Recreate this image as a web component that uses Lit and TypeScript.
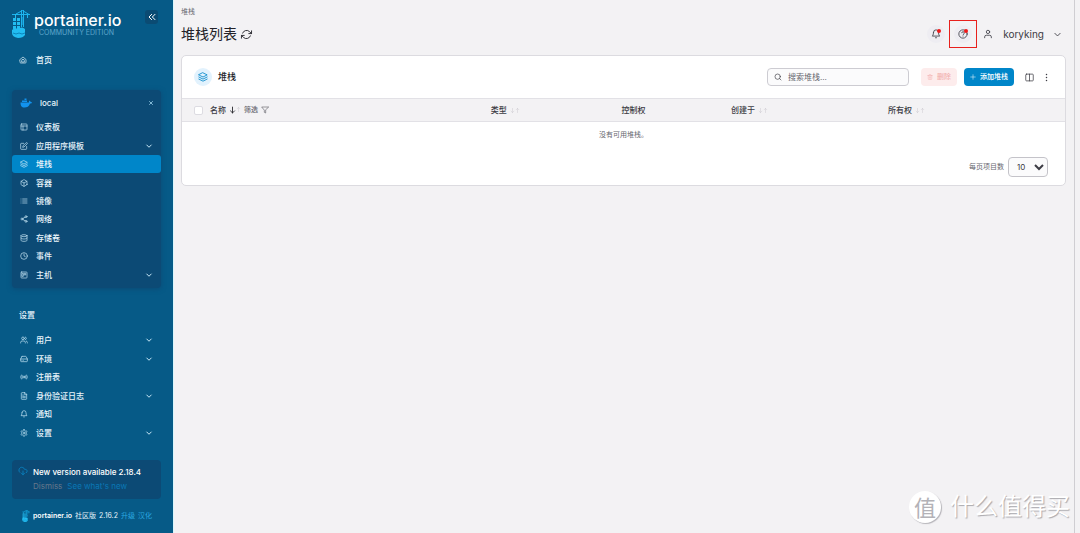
import { LitElement, html, css, svg, nothing } from "lit";
import { customElement, property } from "lit/decorators.js";
import { classMap } from "lit/directives/class-map.js";

const icons: Record<string, any> = {
  home: svg`<path d="M3 10.5 12 3l9 7.5V19a2 2 0 0 1-2 2H5a2 2 0 0 1-2-2z"/><path d="M8 17v-3a4 4 0 0 1 8 0v3z"/>`,
  layout: svg`<rect x="3" y="3" width="18" height="18" rx="2"/><path d="M3 9h18M9 21V9"/>`,
  edit: svg`<path d="M11 4H4a2 2 0 0 0-2 2v14a2 2 0 0 0 2 2h14a2 2 0 0 0 2-2v-7"/><path d="M18.5 2.5a2.1 2.1 0 0 1 3 3L12 15l-4 1 1-4z"/>`,
  layers: svg`<path d="m12 2 10 5-10 5L2 7z"/><path d="m2 12 10 5 10-5"/><path d="m2 17 10 5 10-5"/>`,
  box: svg`<path d="M21 16V8a2 2 0 0 0-1-1.7l-7-4a2 2 0 0 0-2 0l-7 4A2 2 0 0 0 3 8v8a2 2 0 0 0 1 1.7l7 4a2 2 0 0 0 2 0l7-4a2 2 0 0 0 1-1.7z"/><path d="m3.3 7 8.7 5 8.7-5M12 22V12"/>`,
  list: svg`<path d="M8 6h13M8 12h13M8 18h13M3 6h.01M3 12h.01M3 18h.01"/>`,
  share: svg`<circle cx="18" cy="5" r="3"/><circle cx="6" cy="12" r="3"/><circle cx="18" cy="19" r="3"/><path d="m8.6 13.5 6.8 4M15.4 6.5l-6.8 4"/>`,
  database: svg`<ellipse cx="12" cy="5" rx="9" ry="3"/><path d="M21 12c0 1.7-4 3-9 3s-9-1.3-9-3"/><path d="M3 5v14c0 1.7 4 3 9 3s9-1.3 9-3V5"/>`,
  clock: svg`<circle cx="12" cy="12" r="10"/><path d="M12 6v6l4 2"/>`,
  trello: svg`<rect x="3" y="3" width="18" height="18" rx="2"/><path d="M7 7h3v9H7zM14 7h3v5h-3z"/>`,
  users: svg`<path d="M16 21v-2a4 4 0 0 0-4-4H6a4 4 0 0 0-4 4v2"/><circle cx="9" cy="7" r="4"/><path d="M22 21v-2a4 4 0 0 0-3-3.9M16 3.1a4 4 0 0 1 0 7.8"/>`,
  drive: svg`<path d="M22 12H2"/><path d="M5.5 5.1 2 12v6a2 2 0 0 0 2 2h16a2 2 0 0 0 2-2v-6l-3.5-6.9A2 2 0 0 0 16.8 4H7.2a2 2 0 0 0-1.7 1.1zM6 16h.01M10 16h.01"/>`,
  radio: svg`<circle cx="12" cy="12" r="2"/><path d="M7.8 16.2a6 6 0 0 1 0-8.5M16.2 7.8a6 6 0 0 1 0 8.5M4 18a10 10 0 0 1 0-12M20 6a10 10 0 0 1 0 12"/>`,
  file: svg`<path d="M14 2H6a2 2 0 0 0-2 2v16a2 2 0 0 0 2 2h12a2 2 0 0 0 2-2V8z"/><path d="M14 2v6h6M16 13H8M16 17H8M10 9H8"/>`,
  bell: svg`<path d="M6 8a6 6 0 0 1 12 0c0 7 3 9 3 9H3s3-2 3-9"/><path d="M10.3 21a2 2 0 0 0 3.4 0"/>`,
  settings: svg`<path d="M12.2 2h-.4a2 2 0 0 0-2 2v.2a2 2 0 0 1-1 1.7l-.4.3a2 2 0 0 1-2 0l-.2-.1a2 2 0 0 0-2.7.7l-.2.4a2 2 0 0 0 .7 2.7l.2.1a2 2 0 0 1 1 1.7v.5a2 2 0 0 1-1 1.8l-.2.1a2 2 0 0 0-.7 2.7l.2.4a2 2 0 0 0 2.7.7l.2-.1a2 2 0 0 1 2 0l.4.3a2 2 0 0 1 1 1.7v.2a2 2 0 0 0 2 2h.4a2 2 0 0 0 2-2v-.2a2 2 0 0 1 1-1.7l.4-.3a2 2 0 0 1 2 0l.2.1a2 2 0 0 0 2.7-.7l.2-.4a2 2 0 0 0-.7-2.7l-.2-.1a2 2 0 0 1-1-1.8v-.5a2 2 0 0 1 1-1.7l.2-.1a2 2 0 0 0 .7-2.7l-.2-.4a2 2 0 0 0-2.7-.7l-.2.1a2 2 0 0 1-2 0l-.4-.3a2 2 0 0 1-1-1.7V4a2 2 0 0 0-2-2z"/><circle cx="12" cy="12" r="3"/>`,
  down: svg`<path d="m3 8 9 9 9-9"/>`,
  chevrons: svg`<path d="m11 20-8-8 8-8M21 20l-8-8 8-8"/>`,
  close: svg`<path d="M18 6 6 18M6 6l12 12"/>`,
  refresh: svg`<path d="M23 4v6h-6M1 20v-6h6"/><path d="M3.5 9a9 9 0 0 1 14.9-3.4L23 10M1 14l4.6 4.4A9 9 0 0 0 20.5 15"/>`,
  user: svg`<path d="M20 21v-2a4 4 0 0 0-4-4H8a4 4 0 0 0-4 4v2"/><circle cx="12" cy="7" r="4"/>`,
  help: svg`<circle cx="12" cy="12" r="10"/><path d="M9 9a3 3 0 0 1 6 1c0 2-3 2.5-3 4M12 17h.01"/>`,
  search: svg`<circle cx="11" cy="11" r="8"/><path d="m21 21-4.3-4.3"/>`,
  trash: svg`<path d="M3 6h18M19 6v14a2 2 0 0 1-2 2H7a2 2 0 0 1-2-2V6M8 6V4a2 2 0 0 1 2-2h4a2 2 0 0 1 2 2v2M10 11v6M14 11v6"/>`,
  plus: svg`<path d="M12 3v18M3 12h18"/>`,
  columns: svg`<rect x="2" y="3" width="20" height="18" rx="2"/><path d="M12 3v18"/>`,
  more: svg`<path d="M12 4h.01M12 12h.01M12 20h.01"/>`,
  filter: svg`<path d="M22 3H2l8 9.5V19l4 2v-8.5z"/>`,
  cloud: svg`<path d="M4 15a7 7 0 1 1 11.7-7H17.5a4.5 4.5 0 0 1 2.5 8.2M12 12v9M8 17l4 4 4-4"/>`,
  arrowDown: svg`<path d="M12 2v20M5 15l7 7 7-7"/>`,
  arrowUp: svg`<path d="M12 22V2M6 8l6-6 6 6"/>`,
};

const icon = (name: string) => html`<svg
  class="icon i-${name}"
  viewBox="0 0 24 24"
  aria-hidden="true"
>${icons[name]}</svg>`;

const crane = html`<svg class="crane" viewBox="0 0 18 28" aria-hidden="true">
  <g fill="none" stroke="#1db4ee" stroke-width="1">
    <path d="M0 4.5h18M9.5 0v17M11.5 0v17M4 4 10.5.5 17 4.5M9.5 7l2 2-2 2 2 2-2 2M15.5 4.5V8"/>
  </g>
  <g fill="#22bdf2">
    <path d="M1 8h3v3H1zM5 8h3v3H5zM1 12h3v3H1zM5 12h3v3H5zM1 16h3v3H1zM5 16h3v3H5zM3 4h1v4H3z"/>
    <path d="M0 20q3-3 6-1 4-3 7 0v6q-2 3-7 3-6-1-6-5z"/>
  </g>
  <path d="M1 23q3 2 6 0 3 2 6 0" fill="none" stroke="#0b86bd" stroke-width="1"/>
</svg>`;

type Item = { icon: string; label: string; more?: boolean; active?: boolean };

const envItems: Item[] = [
  { icon: "layout", label: "仪表板" },
  { icon: "edit", label: "应用程序模板", more: true },
  { icon: "layers", label: "堆栈", active: true },
  { icon: "box", label: "容器" },
  { icon: "list", label: "镜像" },
  { icon: "share", label: "网络" },
  { icon: "database", label: "存储卷" },
  { icon: "clock", label: "事件" },
  { icon: "trello", label: "主机", more: true },
];

const settingItems: Item[] = [
  { icon: "users", label: "用户", more: true },
  { icon: "drive", label: "环境", more: true },
  { icon: "radio", label: "注册表" },
  { icon: "file", label: "身份验证日志", more: true },
  { icon: "bell", label: "通知" },
  { icon: "settings", label: "设置", more: true },
];

const shared = css`
  * {
    box-sizing: border-box;
  }
  a {
    color: inherit;
    text-decoration: none;
  }
  button {
    display: flex;
    align-items: center;
    justify-content: center;
    padding: 0;
    border: 0;
    background: none;
    color: inherit;
    font: inherit;
  }
  .icon {
    display: block;
    flex: none;
    width: 8px;
    height: 8px;
    fill: none;
    stroke: currentColor;
    stroke-width: 2;
    stroke-linecap: round;
    stroke-linejoin: round;
    overflow: visible;
  }
  .i-down {
    width: 6px;
    height: 6px;
    stroke-width: 4;
  }
`;

@customElement("nav-list")
export class NavList extends LitElement {
  @property({ attribute: false }) items: Item[] = [];

  static styles = [
    shared,
    css`
      :host {
        display: block;
      }
      .list {
        display: grid;
        grid-auto-rows: 1fr;
        height: 100%;
        margin: 0;
        padding: 0;
        list-style: none;
      }
      .item {
        display: flex;
        align-items: center;
        gap: 8px;
        height: 100%;
        padding: 0 9px 0 8px;
        border-radius: 3px;
        color: #e8f4fb;
        font-weight: 500;
      }
      .item.active {
        background: #0086c9;
      }
      .label {
        flex: 1;
      }
      .icon {
        color: #c9e9f8;
      }
    `,
  ];

  render() {
    return html`<ul class="list">
      ${this.items.map(
        (i) => html`<li>
          <a class=${classMap({ item: true, active: !!i.active })} href="#">
            ${icon(i.icon)}<span class="label">${i.label}</span>
            ${i.more ? icon("down") : nothing}
          </a>
        </li>`
      )}
    </ul>`;
  }
}

@customElement("side-bar")
export class SideBar extends LitElement {
  static styles = [
    shared,
    css`
      :host {
        display: flex;
        flex-direction: column;
        padding: 10px 12px;
        background: #065a87;
        color: #e8f4fb;
      }
      .brand {
        display: flex;
        align-items: flex-start;
      }
      .crane {
        width: 18px;
        height: 28px;
      }
      .name {
        flex: 1;
        margin-left: 4px;
        color: #fff;
        font: 500 16px/20px Inter, sans-serif;
      }
      .edition {
        display: block;
        padding-left: 5px;
        color: #5fa6cb;
        font: 400 7px/5px Inter, sans-serif;
      }
      .collapse {
        width: 13px;
        height: 14px;
        margin-right: 3px;
        border-radius: 3px;
        background: #0b4b73;
        color: #fff;
      }
      .collapse .icon {
        width: 8px;
        height: 8px;
        stroke-width: 3;
      }
      .home {
        display: flex;
        align-items: center;
        gap: 9px;
        height: 18px;
        margin-top: 13px;
        padding: 0 7px;
        font-weight: 500;
      }
      .panel {
        margin-top: 21px;
        padding-bottom: 4px;
        border-radius: 4px;
        background: #0c4a75;
        box-shadow: 0 1px 5px #0c4a75;
      }
      .env {
        display: flex;
        align-items: center;
        gap: 8px;
        height: 28px;
        padding: 0 6px 3px 8px;
        font-size: 8px;
        font-weight: 500;
      }
      .whale {
        width: 12px;
        height: 10px;
      }
      .env-name {
        flex: 1;
      }
      .shut {
        width: 8px;
        height: 10px;
        color: #a8dcf6;
      }
      .shut .icon {
        width: 6px;
        height: 6px;
        stroke-width: 3;
      }
      .env-list {
        height: 166px;
      }
      .heading {
        margin: 20px 7px 9px;
        font-size: 8px;
        font-weight: 500;
        line-height: 14px;
      }
      .setting-list {
        height: 111px;
      }
      .update {
        display: grid;
        grid-template-columns: 10px 1fr;
        column-gap: 5px;
        margin-top: auto;
        padding: 6px;
        height: 39px;
        border-radius: 4px;
        background: #0c4a75;
        color: #fff;
        font-size: 8px;
        font-weight: 500;
        line-height: 13px;
      }
      .update .icon {
        width: 10px;
        height: 10px;
        color: #0a84c4;
      }
      .actions {
        display: flex;
        grid-column: 2;
        gap: 5px;
        font-weight: 400;
      }
      .dismiss {
        color: #66788b;
      }
      .news {
        color: #0a78b5;
      }
      .foot {
        display: flex;
        align-items: center;
        gap: 3px;
        height: 14px;
        margin-top: 10px;
        padding-left: 10px;
        font-size: 7px;
      }
      .foot .crane {
        width: 8px;
        height: 12px;
      }
      .foot b {
        color: #fff;
        font-weight: 600;
      }
      .foot a {
        color: #2ba9e0;
      }
    `,
  ];

  render() {
    return html`
      <div class="brand">
        ${crane}
        <div class="name">portainer.io<span class="edition">COMMUNITY EDITION</span></div>
        <button class="collapse" aria-label="收起">${icon("chevrons")}</button>
      </div>
      <a class="home" href="#">${icon("home")}<span>首页</span></a>
      <div class="panel">
        <div class="env">
          <svg class="whale" viewBox="0 0 24 20" aria-hidden="true">
            <path fill="#1292ee" d="M1 9h17c0-2 0-3 1-4 2 1 2 2 2 3 1 0 2 0 3 1-1 2-2 2-4 2-2 6-6 8-11 8-6 0-8-4-8-10zM4 5h10v3H4zM9 1h4v3H9z"/>
          </svg>
          <span class="env-name">local</span>
          <button class="shut" aria-label="关闭">${icon("close")}</button>
        </div>
        <nav-list class="env-list" .items=${envItems}></nav-list>
      </div>
      <h2 class="heading">设置</h2>
      <nav-list class="setting-list" .items=${settingItems}></nav-list>
      <div class="update">
        ${icon("cloud")}<span>New version available 2.18.4</span>
        <div class="actions">
          <button class="dismiss">Dismiss</button>
          <a class="news" href="#">See what's new</a>
        </div>
      </div>
      <div class="foot">
        ${crane}<b>portainer.io</b><span>社区版</span><span>2.16.2</span>
        <a href="#">升级</a><a href="#">汉化</a>
      </div>
    `;
  }
}

@customElement("app-root")
export class AppRoot extends LitElement {
  static styles = [
    shared,
    css`
      :host {
        display: grid;
        grid-template-columns: 173px 1fr 6px;
        position: relative;
        min-height: 100vh;
        background: #f3f2f4;
        color: #3c3c44;
        font: 8px/12px Inter, "Noto Sans CJK SC", sans-serif;
      }
      .main {
        padding: 7px 8px 0 7px;
        border-left: 1px solid #d9f6fb;
      }
      .gutter {
        border-left: 1px solid #cfced2;
      }
      .crumb {
        font-size: 7px;
        line-height: 10px;
        color: #66666e;
      }
      .top {
        display: flex;
        align-items: center;
        justify-content: space-between;
        height: 34px;
      }
      .title {
        display: flex;
        align-items: center;
        gap: 4px;
        margin: 0;
        color: #222228;
        font-size: 14px;
        font-weight: 400;
        line-height: 20px;
      }
      .title .icon {
        width: 11px;
        height: 11px;
      }
      .tools {
        display: flex;
        align-items: center;
        gap: 9px;
        padding-right: 5px;
      }
      .tool {
        position: relative;
        width: 18px;
        height: 18px;
        border-radius: 9px;
        background: #eeedf2;
      }
      .tool .icon,
      .account .i-user {
        width: 10px;
        height: 10px;
      }
      .dot {
        position: absolute;
        top: 4px;
        right: 4px;
        width: 4px;
        height: 4px;
        border-radius: 2px;
        background: #f01818;
      }
      .mark {
        position: absolute;
        inset: -5px;
        border: 1px solid #e8201c;
      }
      .account {
        gap: 10px;
        margin-left: 2px;
        font-size: 10px;
      }
      .account .i-down {
        width: 7px;
        height: 7px;
        stroke-width: 3;
      }
      .card {
        margin-top: 4px;
        border: 1px solid #dcdbe0;
        border-radius: 5px;
        background: #fff;
        overflow: hidden;
      }
      .bar {
        display: flex;
        align-items: center;
        height: 42px;
        padding: 0 14px 0 12px;
      }
      .badge {
        display: grid;
        place-items: center;
        width: 18px;
        height: 18px;
        border-radius: 9px;
        background: #e2f2fd;
        color: #0086c9;
      }
      .badge .icon {
        width: 10px;
        height: 10px;
      }
      .card-title {
        flex: 1;
        margin: 0 0 0 6px;
        color: #222228;
        font-size: 9px;
        font-weight: 500;
      }
      .search {
        display: flex;
        align-items: center;
        gap: 6px;
        width: 142px;
        height: 18px;
        padding: 0 6px;
        border: 1px solid #cdccd2;
        border-radius: 4px;
        background: #fbfbfc;
      }
      .search input {
        flex: 1;
        min-width: 0;
        padding: 0;
        border: 0;
        outline: 0;
        background: none;
        color: inherit;
        font: inherit;
      }
      .search input::placeholder {
        color: #66666e;
      }
      .remove,
      .add {
        gap: 4px;
        height: 18px;
        border-radius: 4px;
        font-size: 7px;
        font-weight: 500;
      }
      .remove {
        width: 36px;
        margin-left: 12px;
        background: #fdecec;
        color: #f2b0b0;
      }
      .add {
        width: 50px;
        margin-left: 7px;
        background: #0086c9;
        color: #fff;
      }
      .remove .icon,
      .add .icon {
        width: 6px;
        height: 6px;
      }
      .view {
        width: 9px;
        margin-left: 11px;
      }
      .view + .view {
        margin-left: 8px;
      }
      .view .icon {
        width: 9px;
        height: 9px;
      }
      .view .i-more {
        stroke-width: 4;
      }
      .table {
        width: 100%;
        border-collapse: collapse;
        table-layout: fixed;
      }
      .table th {
        height: 23px;
        padding: 0;
        border: solid #e2e1e6;
        border-width: 1px 0;
        background: #f3f2f4;
        font-weight: 500;
        text-align: left;
      }
      .table td {
        height: 27px;
        padding: 0;
        color: #66666e;
        font-size: 7px;
        text-align: center;
      }
      .c-check {
        width: 28px;
      }
      .c-name {
        width: 31.8%;
      }
      .c-type {
        width: 14.8%;
      }
      .c-control {
        width: 12.4%;
      }
      .c-created {
        width: 17.8%;
      }
      .check {
        appearance: none;
        display: block;
        width: 9px;
        height: 9px;
        margin: 0 0 0 12px;
        border: 1px solid #dddce2;
        border-radius: 2px;
        background: #fff;
      }
      .head {
        display: flex;
        align-items: center;
        gap: 3px;
      }
      .sort {
        display: flex;
        color: #c4c3c9;
      }
      .sort .icon {
        width: 5px;
        height: 7px;
      }
      .sort.on .i-arrowDown {
        width: 7px;
        height: 8px;
        color: #222228;
        stroke-width: 3;
      }
      .filter-button {
        gap: 3px;
        color: #66666e;
        font-size: 7px;
      }
      .pager {
        display: flex;
        align-items: center;
        justify-content: flex-end;
        gap: 4px;
        height: 36px;
        padding-right: 17px;
        color: #66666e;
        font-size: 7px;
      }
      .size {
        width: 40px;
        height: 20px;
        padding: 0 0 0 4px;
        border: 1px solid #c4c3c9;
        border-radius: 4px;
        background: #fbfbfc;
        color: #3c3c44;
        font: 8px Inter, sans-serif;
      }
      .watermark {
        position: absolute;
        right: 10px;
        bottom: 9px;
        display: flex;
        align-items: center;
        gap: 9px;
        color: #fff;
        font-size: 24px;
        line-height: 34px;
        text-shadow: 1px 1px 1px #a9a8ad;
      }
      .seal {
        display: grid;
        place-items: center;
        width: 32px;
        height: 32px;
        border-radius: 16px;
        background: #fff;
        box-shadow: 1px 1px 1px #b5b4b9;
        color: #b3b2b7;
        font-size: 22px;
        text-shadow: none;
      }
    `,
  ];

  private head(label: string, sort = true) {
    return html`<div class="head">
      ${label}${sort
        ? html`<span class="sort">${icon("arrowDown")}${icon("arrowUp")}</span>`
        : nothing}
    </div>`;
  }

  render() {
    return html`
      <side-bar></side-bar>
      <main class="main">
        <div class="crumb">堆栈</div>
        <header class="top">
          <h1 class="title">
            堆栈列表<button aria-label="刷新">${icon("refresh")}</button>
          </h1>
          <div class="tools">
            <button class="tool" aria-label="通知">${icon("bell")}<span class="dot"></span></button>
            <button class="tool" aria-label="帮助">
              ${icon("help")}<span class="dot"></span><span class="mark"></span>
            </button>
            <button class="account">
              ${icon("user")}<span>koryking</span>${icon("down")}
            </button>
          </div>
        </header>
        <section class="card">
          <div class="bar">
            <span class="badge">${icon("layers")}</span>
            <h2 class="card-title">堆栈</h2>
            <label class="search">
              ${icon("search")}<input type="text" aria-label="搜索堆栈" placeholder="搜索堆栈..." />
            </label>
            <button class="remove" disabled>${icon("trash")}删除</button>
            <button class="add">${icon("plus")}添加堆栈</button>
            <button class="view" aria-label="列">${icon("columns")}</button>
            <button class="view" aria-label="更多">${icon("more")}</button>
          </div>
          <table class="table">
            <thead>
              <tr>
                <th class="c-check"><input class="check" type="checkbox" aria-label="全选" /></th>
                <th class="c-name">
                  <div class="head">
                    名称<span class="sort on">${icon("arrowDown")}${icon("arrowUp")}</span>
                    <button class="filter-button">筛选${icon("filter")}</button>
                  </div>
                </th>
                <th class="c-type">${this.head("类型")}</th>
                <th class="c-control">${this.head("控制权", false)}</th>
                <th class="c-created">${this.head("创建于")}</th>
                <th>${this.head("所有权")}</th>
              </tr>
            </thead>
            <tbody>
              <tr><td colspan="6">没有可用堆栈。</td></tr>
            </tbody>
          </table>
          <div class="pager">
            <label for="size">每页项目数</label>
            <select class="size" id="size"><option>10</option></select>
          </div>
        </section>
      </main>
      <div class="gutter"></div>
      <div class="watermark"><span class="seal">值</span>什么值得买</div>
    `;
  }
}
